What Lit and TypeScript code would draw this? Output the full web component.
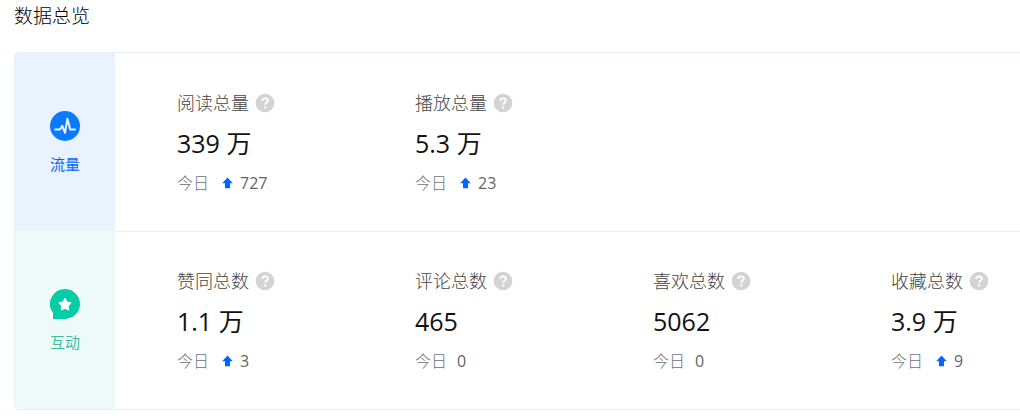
import { LitElement, html, css, nothing } from "lit";
import { customElement, property } from "lit/decorators.js";

interface Metric {
  label: string;
  value: string;
  today: string;
  up: boolean;
}

interface Group {
  kind: "traffic" | "interact";
  name: string;
  metrics: Metric[];
}

const GROUPS: Group[] = [
  {
    kind: "traffic",
    name: "流量",
    metrics: [
      { label: "阅读总量", value: "339 万", today: "727", up: true },
      { label: "播放总量", value: "5.3 万", today: "23", up: true },
    ],
  },
  {
    kind: "interact",
    name: "互动",
    metrics: [
      { label: "赞同总数", value: "1.1 万", today: "3", up: true },
      { label: "评论总数", value: "465", today: "0", up: false },
      { label: "喜欢总数", value: "5062", today: "0", up: false },
      { label: "收藏总数", value: "3.9 万", today: "9", up: true },
    ],
  },
];

@customElement("metric-cell")
export class MetricCell extends LitElement {
  @property({ attribute: false }) metric!: Metric;

  static styles = css`
    :host {
      display: flex;
      flex-direction: column;
    }
    .head {
      display: flex;
      align-items: center;
      gap: 7px;
      font-size: 18px;
      line-height: 24px;
      font-weight: 300;
      color: #444;
    }
    .help {
      display: block;
      width: 18px;
      height: 18px;
      padding: 0;
      border: 0;
      background: none;
      cursor: pointer;
    }
    .help svg {
      display: block;
      overflow: visible;
    }
    .value {
      margin-top: 8px;
      font-size: 25px;
      line-height: 40px;
      color: #121212;
      white-space: nowrap;
    }
    .today {
      display: flex;
      align-items: center;
      margin-top: 8px;
      font-size: 16px;
      line-height: 24px;
      color: #646464;
    }
    .day {
      margin-right: 10px;
      font-weight: 300;
      color: #707070;
    }
    .arrow {
      margin: 0 7px 0 3px;
    }
  `;

  render() {
    const m = this.metric;
    return html`
      <div class="head">
        <span>${m.label}</span>
        <button class="help" type="button" aria-label="${m.label}">
          <svg width="18" height="18" viewBox="0 0 18 18" aria-hidden="true">
            <circle cx="9" cy="9" r="9.3" fill="#d3d3d3" />
            <path d="M6.2 7.1C6.2 5.3 7.4 4.4 9.1 4.4s2.8.9 2.8 2.4c0 1.9-2.7 2-2.7 4" fill="none" stroke="#fff" stroke-width="1.8" />
            <circle cx="9.2" cy="13.4" r="1.2" fill="#fff" />
          </svg>
        </button>
      </div>
      <div class="value">${m.value}</div>
      <div class="today">
        <span class="day">今日</span>
        ${m.up
          ? html`<svg class="arrow" width="11" height="12" viewBox="0 0 11 12" aria-hidden="true">
              <path d="M5.5 0.6 10.8 6.3H8V11.2H3V6.3H.2Z" fill="#0066ff" />
            </svg>`
          : nothing}
        <span>${m.today}</span>
      </div>
    `;
  }
}

@customElement("app-root")
export class AppRoot extends LitElement {
  static styles = css`
    :host {
      display: block;
      overflow: hidden;
      padding: 0 0 9px 14px;
      background: #fff;
      font-family: "Open Sans", "Noto Sans CJK SC", sans-serif;
    }
    .title {
      margin: 0 0 20px;
      font-size: 19px;
      line-height: 32px;
      font-weight: 300;
      color: #000;
    }
    .card {
      box-sizing: border-box;
      width: max-content;
      min-width: 100%;
      border: 1px solid #e6f0fd;
      border-radius: 4px;
      overflow: hidden;
    }
    .row {
      display: grid;
      grid-template-columns: 100px 1fr;
    }
    .side {
      display: flex;
      flex-direction: column;
      align-items: center;
      justify-content: center;
      gap: 12px;
      padding-top: 2px;
      font-size: 15px;
      line-height: 22px;
    }
    .traffic .side {
      background: #ebf2ff;
      color: #0066ff;
    }
    .interact .side {
      background: #eefaf8;
      color: #3fbf9c;
    }
    .side svg {
      display: block;
    }
    .metrics {
      display: grid;
      grid-template-columns: repeat(4, minmax(238px, 1fr));
      padding: 38px 0 36px 62px;
    }
    .row + .row .metrics {
      border-top: 1px solid #e6f0fd;
      padding-top: 37px;
    }
  `;

  private icon(kind: Group["kind"]) {
    return kind === "traffic"
      ? html`<svg width="30" height="30" viewBox="0 0 30 30" aria-hidden="true">
          <circle cx="15" cy="15" r="15" fill="#0a7aff" />
          <path d="M5.2 18.5H10L12.3 14.8 15 21.8 17.4 7.8 20.2 18.5H25" fill="none" stroke="#e8f3ff" stroke-width="2" stroke-linecap="round" stroke-linejoin="round" />
        </svg>`
      : html`<svg width="30" height="30" viewBox="0 0 30 30" aria-hidden="true">
          <path d="M0 0H30V30H0Z" fill="#fff" />
          <path d="M15 0A15 15 0 0 1 15 30H3V24A15 15 0 0 1 15 0Z" fill="#06cda6" />
          <path d="M15 9.6 16.9 13.2 20.8 13.9 18.1 16.8 18.6 20.8 15 19.1 11.4 20.8 11.9 16.8 9.2 13.9 13.1 13.2Z" fill="#fff" stroke="#fff" stroke-width="1.2" stroke-linejoin="round" />
        </svg>`;
  }

  render() {
    return html`
      <h1 class="title">数据总览</h1>
      <div class="card">
        ${GROUPS.map(
          (g) => html`
            <section class="row ${g.kind}">
              <div class="side">
                ${this.icon(g.kind)}
                <span>${g.name}</span>
              </div>
              <div class="metrics">
                ${g.metrics.map((m) => html`<metric-cell .metric=${m}></metric-cell>`)}
              </div>
            </section>
          `
        )}
      </div>
    `;
  }
}
